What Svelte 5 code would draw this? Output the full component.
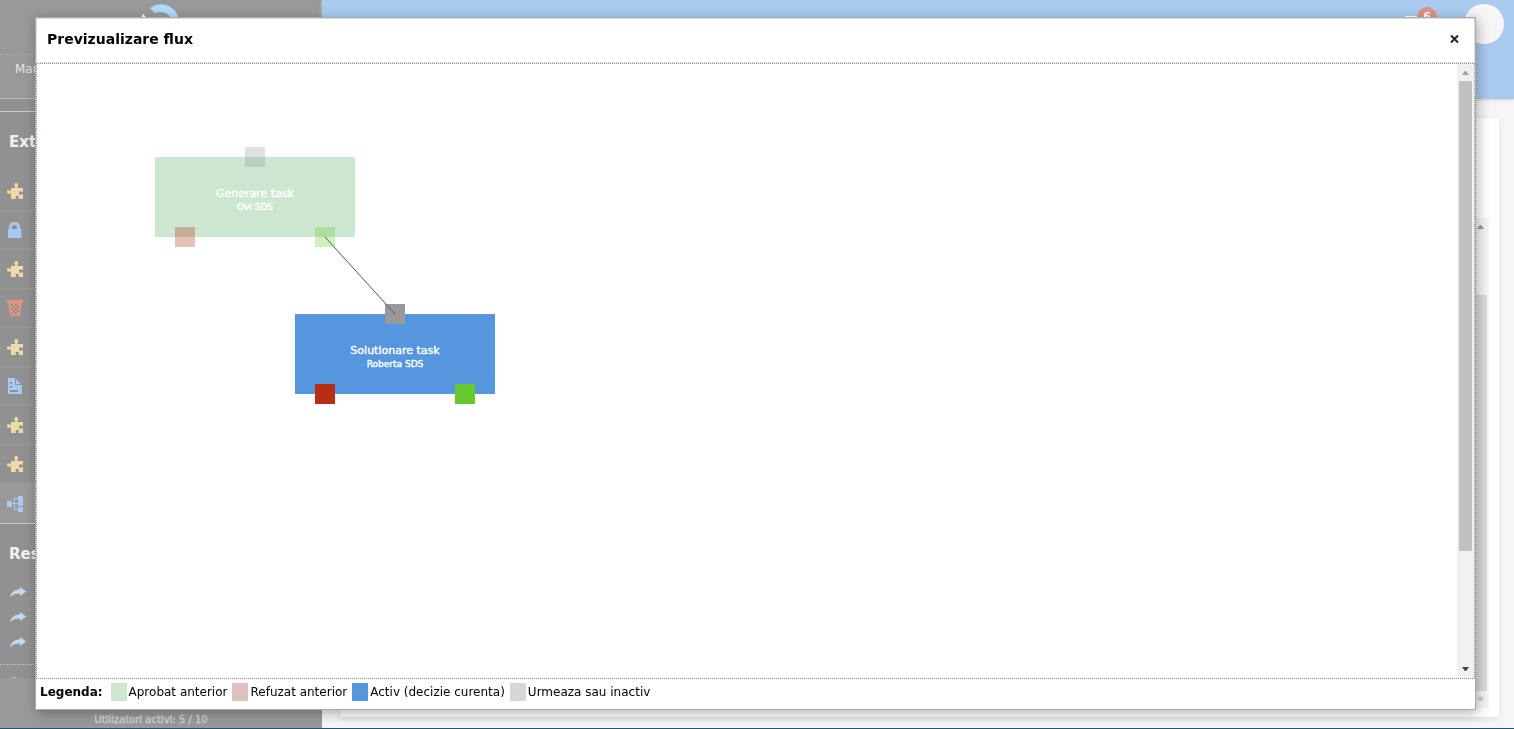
<script lang="ts">
	type Status = 'approved' | 'active';
	type Step = { id: number; title: string; user: string; x: number; y: number; status: Status };

	const icons: Record<string, string> = {
		puzzle: 'M0 8.500C0 7.500 1 7 2 7.500c.8.400 1.500.5 2 .2V5h4V3.800C7.500 3 7.300 2.200 7.500 1.200 7.800-.4 10.500-.4 11 1.200c.2 1 0 1.800-.5 2.600V5H16v4c-1.200 0-2-.8-3-.6-1.400.4-1.400 3 0 3.400 1 .2 1.800-.6 3-.6V16h-4.500c0-1 .6-1.600.3-2.400-.5-1.200-2.700-1.200-3.200 0-.3.8.4 1.400.4 2.400H4v-5.500c-.6-.2-1.200 0-2 .3C1 11 0 10 0 8.500z',
		lock: 'M1 7h1V5.500C2 2 4 0 7.500 0S13 2 13 5.500V7h1.500v9H1zM5 7h5V5.500C10 4 9 3 7.500 3S5 4 5 5.500z',
		basket: 'M0 0h16v3h-1l-2 12-1 1H4l-1-1L1 3H0zM4 4v2h2V4zm4 0v2h2V4zM6 6v2h2V6zm4 0v2h2V6zM4 8v2h2V8zm4 0v2h2V8zm-2 2v2h2v-2zm4 0v2h2v-2zm-5 2v2h1v-2zm3 0v2h2v-2z',
		document: 'M1 0h7v7h7v9H1zM3 4v2h2V4zm0 4v2h2V8zm0 4v2h8v-2zM9 1l5 5H9z',
		tree: 'M0 5h5v2h2V2h4V0h5v5h-5V3H8v4h3V5h5v5h-5V8H8v5h3v-2h5v5h-5v-2H7V8H5v3H0z'
	};

	const tools = [
		{ icon: 'puzzle', tone: 'sand' },
		{ icon: 'lock', tone: 'sky' },
		{ icon: 'puzzle', tone: 'sand' },
		{ icon: 'basket', tone: 'coral' },
		{ icon: 'puzzle', tone: 'sand' },
		{ icon: 'document', tone: 'sky' },
		{ icon: 'puzzle', tone: 'sand' },
		{ icon: 'puzzle', tone: 'sand' },
		{ icon: 'tree', tone: 'sky' }
	];

	const steps: Step[] = [
		{ id: 1, title: 'Generare task', user: 'Ovi SDS', x: 118, y: 93, status: 'approved' },
		{ id: 2, title: 'Solutionare task', user: 'Roberta SDS', x: 258, y: 250, status: 'active' }
	];

	const legend = [
		{ label: 'Aprobat anterior', cls: 'approved' },
		{ label: 'Refuzat anterior', cls: 'refused' },
		{ label: 'Activ (decizie curenta)', cls: 'active' },
		{ label: 'Urmeaza sau inactiv', cls: 'inactive' }
	];

	// from the approve port of the first step to the input port of the next
	const link = {
		x1: steps[0].x + 170,
		y1: steps[0].y + 80,
		x2: steps[1].x + 100,
		y2: steps[1].y
	};

	let open = $state(true);
</script>

<div class="app">
	<aside>
		<div class="brand">
			<svg class="logo" width="40" height="40" viewBox="0 0 40 40" aria-hidden="true">
				<path d="M9 6A18 18 0 0 1 38 22l-6-1A13 13 0 0 0 14 11z" fill="#aedcff" />
				<path d="M0 16l2-4 4 4z" fill="#fff" />
			</svg>
		</div>
		<div class="account">Man</div>
		<div class="gap"></div>
		<nav>
			<h2>Ext</h2>
			{#each tools as t, i}
				<a href="#tool-{i}" class="tool {t.tone}" class:current={t.icon === 'tree'} aria-label={t.icon}>
					<svg width="16" height="16" viewBox="0 0 16 16"><path fill-rule="evenodd" d={icons[t.icon]} /></svg>
				</a>
			{/each}
			<h2 class="second">Res</h2>
			<div class="shares">
				{#each [1, 2, 3] as n}
					<a href="#share-{n}" aria-label="share {n}">
						<svg width="16" height="11" viewBox="0 0 16 11"><path d="M0 10.500C1 5 5 2.500 10 2.500V0l6 4.500-6 4.500V6.500C6 6.500 3 7 0 10.500z" /></svg>
					</a>
				{/each}
			</div>
			<div class="more">
				<svg width="16" height="16" viewBox="0 0 16 16"><circle cx="8" cy="8" r="7" /></svg>
			</div>
		</nav>
		<footer>Utilizatori activi: 5 / 10</footer>
	</aside>

	<div class="page">
		<header>
			<button class="menu" aria-label="Mesaje"><span class="badge">6</span></button>
			<div class="avatar"></div>
		</header>
		<main>
			<div class="scroll outer">
				<svg width="7" height="4" viewBox="0 0 7 4"><path d="M0 4L3 0h1l3 4z" /></svg>
				<div class="thumb"></div>
				<svg class="down" width="7" height="4" viewBox="0 0 7 4"><path d="M0 0h7L4 4H3z" /></svg>
			</div>
		</main>
	</div>
</div>

{#if open}
	<div class="dialog" role="dialog" aria-labelledby="dialog-title">
		<div class="title">
			<h1 id="dialog-title">Previzualizare flux</h1>
			<button class="close" aria-label="Inchide" onclick={() => (open = false)}>
				<svg width="9" height="8" viewBox="0 0 9 8"><path d="M1 0.500L8 7.500M8 0.500L1 7.500" /></svg>
			</button>
		</div>
		<div class="body">
			<div class="canvas">
				{#each steps as s (s.id)}
					<div class="step {s.status}" style="left: {s.x}px; top: {s.y}px">
						<span class="name">{s.title}</span>
						<span class="user">{s.user}</span>
						<i class="port in"></i>
						<i class="port no"></i>
						<i class="port yes"></i>
					</div>
				{/each}
				<svg class="links"><line {...link} /></svg>
			</div>
			<div class="scroll">
				<svg class="dim" width="7" height="4" viewBox="0 0 7 4"><path d="M0 4L3 0h1l3 4z" /></svg>
				<div class="thumb"></div>
				<svg width="7" height="4" viewBox="0 0 7 4"><path d="M0 0h7L4 4H3z" /></svg>
			</div>
		</div>
		<div class="legend">
			<strong>Legenda:</strong>
			{#each legend as l}
				<span class="key"><i class={l.cls}></i>{l.label}</span>
			{/each}
		</div>
	</div>
{/if}

<style>
	:global(body) {
		margin: 0;
		font-family: Verdana, 'DejaVu Sans', sans-serif;
		font-size: 12px;
		color: #000;
	}
	.app {
		display: flex;
		height: 100vh;
		box-sizing: border-box;
		overflow: hidden;
		border-bottom: 1px solid #1b5a70;
		background: #f6f6f6;
	}
	aside {
		width: 322px;
		display: flex;
		flex-direction: column;
		background: #999;
		color: #e3e3e3;
	}
	.brand {
		height: 54px;
		flex: none;
		border-bottom: 1px dotted #b0b0b0;
	}
	.logo {
		display: block;
		margin: 2px auto 0;
	}
	.account {
		flex: none;
		height: 43px;
		line-height: 28px;
		padding-left: 15px;
		border-bottom: 1px solid #b8b8b8;
	}
	.gap {
		flex: none;
		height: 12px;
		background: #919191;
		border-bottom: 1px solid #ccc;
	}
	nav {
		flex: 1;
		min-height: 0;
		overflow: hidden;
		background: #919191;
	}
	h2 {
		margin: 0;
		height: 60px;
		line-height: 60px;
		padding-left: 9px;
		font-size: 15px;
		color: #f2f2f2;
	}
	.tool {
		display: flex;
		align-items: center;
		height: 38px;
		padding-left: 7px;
		border-bottom: 1px solid #9b9b9b;
	}
	.tool.current {
		height: 39px;
		background: #999;
		border-bottom-color: #ccc;
	}
	.sand {
		fill: #eddcaa;
	}
	.sky {
		fill: #a6c9ef;
	}
	.coral {
		fill: #dd9486;
	}
	.shares {
		padding-bottom: 9px;
		border-bottom: 1px dotted #a6c9ef;
	}
	.shares a {
		display: flex;
		align-items: center;
		height: 25px;
		padding-left: 10px;
		fill: #c6d9f1;
	}
	.second {
		height: 56px;
	}
	.more {
		padding: 11px 0 0 6px;
		fill: #a6c9ef;
	}
	footer {
		flex: none;
		height: 50px;
		box-sizing: border-box;
		padding: 34px 20px 0 0;
		text-align: center;
		font-size: 10px;
		line-height: 16px;
		color: #d0d0d0;
		-webkit-text-stroke: 0.4px #d0d0d0;
	}
	.page {
		flex: 1;
		display: flex;
		flex-direction: column;
	}
	header {
		flex: none;
		height: 99px;
		box-sizing: border-box;
		padding: 4px 10px 0;
		display: flex;
		justify-content: flex-end;
		gap: 27px;
		background: #aacbef;
		box-shadow: 0 1px 3px #ccc;
	}
	.menu {
		width: 32px;
		height: 24px;
		padding: 2px 0 0 12px;
		border: 0;
		background: linear-gradient(#fff, #fff) 0 12px / 12px 1px no-repeat;
	}
	.badge {
		display: block;
		width: 20px;
		height: 20px;
		border-radius: 50%;
		background: #dd9486;
		color: #fff;
		font: bold 11px/20px Verdana, 'DejaVu Sans', sans-serif;
		text-align: center;
	}
	.avatar {
		width: 40px;
		height: 40px;
		border-radius: 50%;
		background: #f6f6f6;
	}
	main {
		flex: 1;
		margin: 19px 15px 11px 18px;
		padding: 100px 10px 9px;
		display: flex;
		justify-content: flex-end;
		background: #fff;
		box-shadow: 0 2px 6px #ddd;
	}
	.scroll {
		flex: none;
		width: 17px;
		display: flex;
		flex-direction: column;
		align-items: center;
		padding: 7px 0;
		box-sizing: border-box;
		background: #f1f1f1;
		fill: #404040;
	}
	.scroll svg {
		flex: none;
	}
	.thumb {
		width: 13px;
		height: 470px;
		margin: 6px 0 auto;
		background: #c1c1c1;
	}
	.dim {
		fill: #a0a0a0;
	}
	.outer {
		background: #f6f6f6;
		fill: #999;
	}
	.outer .thumb {
		height: 396px;
		margin: auto 0 6px;
		background: #ddd;
	}
	.down {
		fill: #ccc;
	}
	.dialog {
		position: fixed;
		inset: 17px 38px 19px 35px;
		display: flex;
		flex-direction: column;
		border: 1px solid #aaa;
		background: #fff;
		box-shadow: 2px 3px 12px rgba(0, 0, 0, 0.3);
	}
	.title {
		display: flex;
		align-items: center;
		justify-content: space-between;
		height: 40px;
		padding: 0 15px 3px 10px;
		border: 1px solid #ddd;
	}
	h1 {
		margin: 0;
		font-size: 14px;
		line-height: 20px;
	}
	.close {
		display: flex;
		padding: 0;
		border: 0;
		background: none;
		cursor: pointer;
	}
	.close path {
		stroke: #222;
		stroke-width: 2;
	}
	.body {
		flex: 1;
		min-height: 0;
		display: flex;
		border: 1px dotted #888;
	}
	.canvas {
		flex: 1;
		position: relative;
		overflow: hidden;
	}
	.links {
		position: absolute;
		width: 100%;
		height: 100%;
	}
	.links line {
		stroke: #555;
	}
	.step {
		position: absolute;
		width: 200px;
		height: 80px;
		box-sizing: border-box;
		padding-top: 30px;
		display: flex;
		flex-direction: column;
		align-items: center;
		color: #fff;
		line-height: 14px;
		-webkit-text-stroke: 0.4px #fff;
	}
	.name {
		font-size: 11px;
	}
	.user {
		font-size: 9px;
		line-height: 13px;
	}
	.approved {
		background: #cde6d0;
	}
	.refused {
		background: #dcc3bf;
	}
	.active {
		background: #5596de;
	}
	.inactive {
		background: #d6d6d6;
	}
	.port {
		position: absolute;
		width: 20px;
		height: 20px;
	}
	.in {
		left: 90px;
		top: -10px;
		background: #999;
	}
	.no {
		left: 20px;
		bottom: -10px;
		background: #b72e12;
	}
	.yes {
		right: 20px;
		bottom: -10px;
		background: #66c92d;
	}
	.approved .port {
		opacity: 0.3;
	}
	.approved .in {
		background: #999aa6;
	}
	.legend {
		display: flex;
		align-items: center;
		height: 30px;
		padding: 0 4px 4px;
		gap: 5px;
		box-sizing: border-box;
		white-space: nowrap;
	}
	.legend strong {
		margin-right: 3px;
	}
	.key {
		display: flex;
		align-items: center;
		gap: 2px;
	}
	.key i {
		width: 16px;
		height: 18px;
	}
</style>
